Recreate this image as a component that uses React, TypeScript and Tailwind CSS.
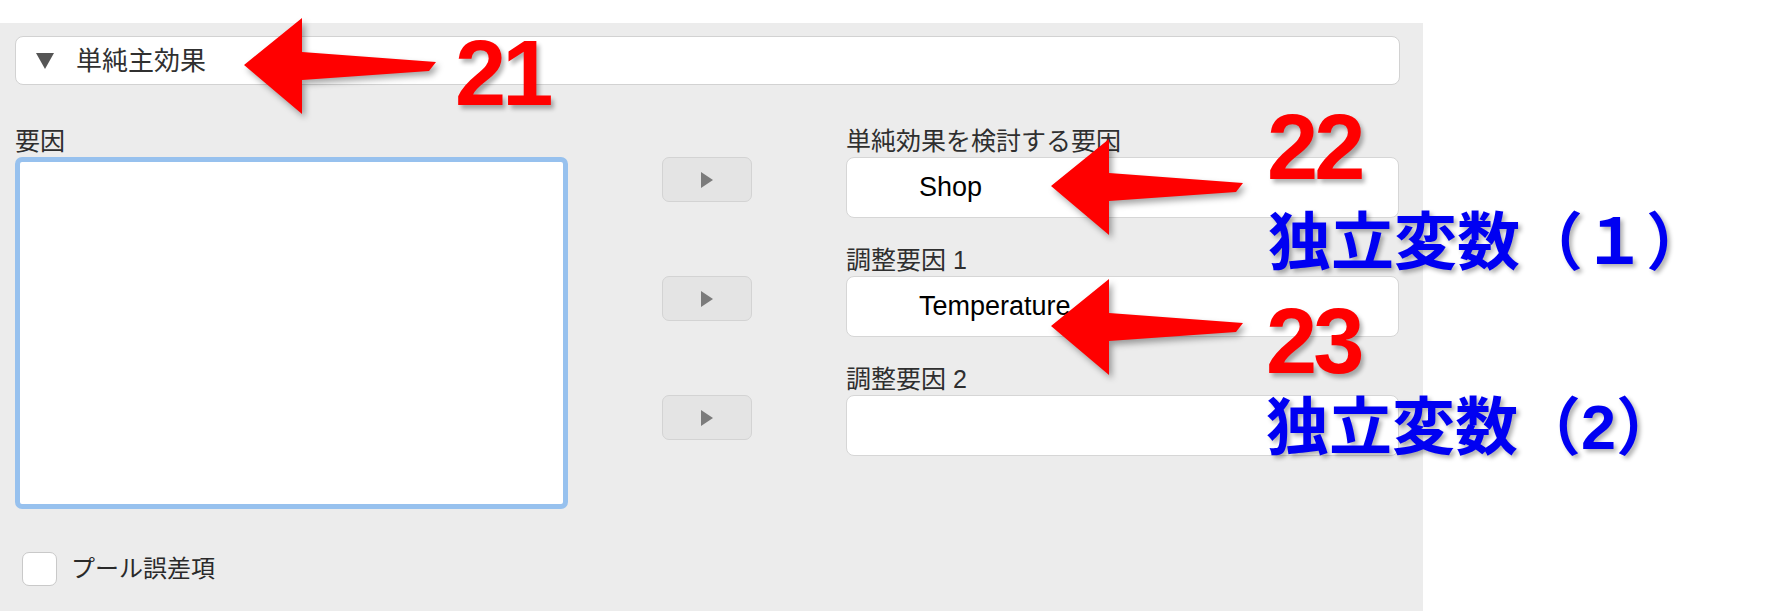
const FONT = "font-['Liberation_Sans','Noto_Sans_CJK_JP',sans-serif]";

function Arrow({ className }: { className: string }) {
    return (
        <svg
            className={`absolute drop-shadow-[3px_4px_3px_rgba(0,0,0,0.35)] ${className}`}
            width="200"
            height="100"
            viewBox="0 0 200 100"
        >
            <polygon
                points="1,48 59,1 59,35 193,45 186,54 59,63 59,97"
                fill="#ff0000"
            />
        </svg>
    );
}

function Label({ children, className = "" }: { children: React.ReactNode; className?: string }) {
    return <div className={`text-[25px] leading-[30px] text-[#2f2f2f] ${className}`}>{children}</div>;
}

function MoveButton() {
    return (
        <button className="flex h-[45px] w-[90px] items-center justify-center rounded-[7px] border border-[#d3d3d3] bg-[#e4e4e4]">
            <svg width="14" height="18" viewBox="0 0 14 18">
                <polygon points="1,1 13,9 1,17" fill="#7b7b7b" />
            </svg>
        </button>
    );
}

function ValueBox({ value }: { value?: string }) {
    return (
        <div className="mt-px flex h-[61px] items-center rounded-[8px] border border-[#d6d6d6] bg-white pl-[72px] text-[27px] text-black">
            {value}
        </div>
    );
}

export default function App() {
    return (
        <div className={`relative h-[611px] w-[1774px] overflow-hidden bg-white ${FONT}`}>
            <div className="mt-[23px] flex h-[588px] w-[1423px] flex-col bg-[#ececec] pl-[15px] pr-[23px]">
                <div className="mt-[13px] flex h-[49px] items-center gap-[21px] rounded-[8px] border border-[#d2d2d2] bg-white pl-[19px]">
                    <svg width="20" height="18" viewBox="0 0 20 18">
                        <polygon points="1,1 19,1 10,17" fill="#555555" />
                    </svg>
                    <span className="text-[26px] leading-none text-[#303030]">単純主効果</span>
                </div>

                <div className="mt-[41px] grid grid-cols-[553px_90px_553px] gap-x-[94px]">
                    <div className="flex flex-col">
                        <Label>要因</Label>
                        <div className="mt-px h-[352px] rounded-[7px] border-[5px] border-[#97c1ee] bg-white" />
                    </div>

                    <div className="flex flex-col gap-[74px] pt-[31px]">
                        <MoveButton />
                        <MoveButton />
                        <MoveButton />
                    </div>

                    <div className="flex flex-col">
                        <Label>単純効果を検討する要因</Label>
                        <ValueBox value="Shop" />
                        <Label className="mt-[27px]">調整要因 1</Label>
                        <ValueBox value="Temperature" />
                        <Label className="mt-[27px]">調整要因 2</Label>
                        <ValueBox />
                    </div>
                </div>

                <div className="ml-[7px] mt-[43px] flex items-center gap-[14px]">
                    <div className="h-[34px] w-[35px] rounded-[7px] border border-[#c9c9c9] bg-white" />
                    <span className="text-[24px] leading-none text-[#2a2a2a]">プール誤差項</span>
                </div>
            </div>

            {/* annotations */}
            <Arrow className="left-[243px] top-[17px]" />
            <Arrow className="left-[1050px] top-[138px]" />
            <Arrow className="left-[1050px] top-[278px]" />

            <div className="absolute left-[455px] top-[27px] text-[92px] font-bold leading-none tracking-[-4px] text-[#ff0000] [text-shadow:3px_4px_4px_rgba(0,0,0,0.3)]">
                21
            </div>
            <div className="absolute left-[1267px] top-[101px] text-[92px] font-bold leading-none tracking-[-4px] text-[#ff0000] [text-shadow:3px_4px_4px_rgba(0,0,0,0.3)]">
                22
            </div>
            <div className="absolute left-[1266px] top-[295px] text-[92px] font-bold leading-none tracking-[-4px] text-[#ff0000] [text-shadow:3px_4px_4px_rgba(0,0,0,0.3)]">
                23
            </div>
            <div className="absolute left-[1268px] top-[211px] whitespace-nowrap text-[63px] font-bold leading-none text-[#0000f2] [text-shadow:3px_3px_4px_rgba(0,0,0,0.3)]">
                独立変数（１）
            </div>
            <div className="absolute left-[1266px] top-[396px] whitespace-nowrap text-[63px] font-bold leading-none text-[#0000f2] [text-shadow:3px_3px_4px_rgba(0,0,0,0.3)]">
                独立変数（2）
            </div>
        </div>
    );
}
